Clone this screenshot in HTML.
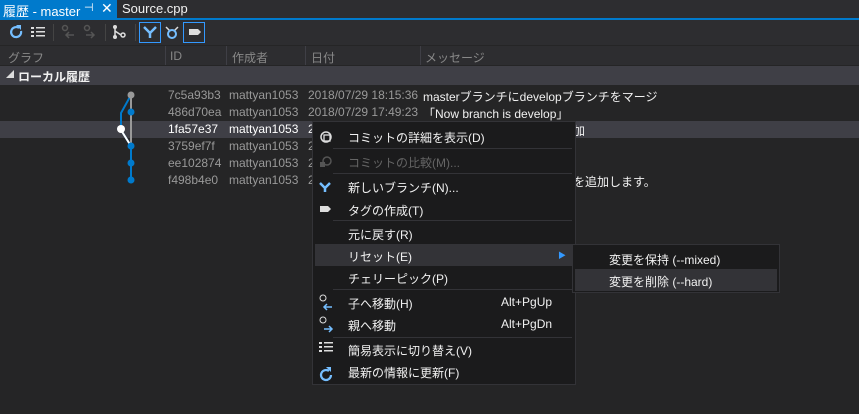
<!DOCTYPE html>
<html><head><meta charset="utf-8"><style>
*{margin:0;padding:0;box-sizing:border-box}
body{width:859px;height:414px;background:#252526;font-family:"Liberation Sans","Noto Sans CJK JP",sans-serif;font-size:12px;color:#f1f1f1;position:relative;overflow:hidden}
.a{position:absolute;white-space:nowrap}
.g{color:#999}
.m{position:absolute;left:312px;top:121px;width:264px;height:264px;background:#1b1b1c;border:1px solid #333337}
.sep{position:absolute;left:20px;right:3px;height:1px;background:#333337}
.it{position:absolute;left:35px;font-size:12px}
</style></head><body>
<div class="a" style="left:0;top:0;width:859px;height:18px;background:#2d2d30"></div>
<div class="a" style="left:0;top:0;width:117px;height:18px;background:#007acc"></div>
<div class="a" style="left:0;top:18px;width:859px;height:2px;background:#007acc"></div>
<div class="a" style="left:3px;top:1px;font-size:13px;color:#fff">履歴 - master</div>
<div class="a" style="left:84px;top:1px;font-size:11px;color:#fff">⊣</div>
<div class="a" style="left:101px;top:0px;font-size:14px;color:#fff">✕</div>
<div class="a" style="left:122px;top:1px;font-size:13px;color:#f1f1f1">Source.cpp</div>
<div class="a" style="left:0;top:20px;width:859px;height:25px;background:#2d2d30"></div>
<svg class="a" style="left:0;top:20px" width="220" height="25">
<path d="M21 11a5 5 0 1 1-2-3" stroke="#75beff" stroke-width="2.2" fill="none"/><path d="M16 5h5v5z" fill="#75beff"/>
<g fill="#ddd"><rect x="31" y="7" width="3" height="2"/><rect x="31" y="11" width="3" height="2"/><rect x="31" y="15" width="3" height="2"/><rect x="36" y="7" width="9" height="1.5"/><rect x="36" y="11" width="9" height="1.5"/><rect x="36" y="15" width="9" height="1.5"/></g>
<rect x="53" y="4" width="1" height="17" fill="#444"/>
<g stroke="#555" fill="none" stroke-width="1.5"><circle cx="65" cy="8" r="2.5"/><path d="M74 15h-8m3-3l-3 3 3 3"/><circle cx="87" cy="8" r="2.5"/><path d="M86 15h8m-3-3l3 3-3 3"/></g>
<rect x="105" y="4" width="1" height="17" fill="#444"/>
<g stroke="#ddd" fill="none" stroke-width="1.5"><path d="M115 7v10M115 11l6 4"/><circle cx="123" cy="15" r="2"/></g><circle cx="115" cy="7" r="2" fill="#ddd"/><circle cx="115" cy="17" r="2" fill="#ddd"/>
<rect x="135" y="4" width="1" height="17" fill="#444"/>
<rect x="139.5" y="2.5" width="21" height="20" fill="none" stroke="#3399ff"/>
<path d="M144 7l6 6 6-6M150 13v5" stroke="#75beff" stroke-width="2.5" fill="none"/>
<path d="M166 7l4 4M178 7l-4 4" stroke="#ddd" stroke-width="1.5"/><circle cx="172" cy="14" r="4" fill="none" stroke="#75beff" stroke-width="2"/>
<rect x="183.5" y="2.5" width="21" height="20" fill="none" stroke="#3399ff"/>
<path d="M189 9h9l3 3-3 3h-9z" fill="#ddd"/>
</svg>
<div class="a" style="left:0;top:46px;width:859px;height:19px;background:#2d2d30"></div>
<div class="a" style="left:165px;top:46px;width:1px;height:19px;background:#3f3f46"></div>
<div class="a" style="left:226px;top:46px;width:1px;height:19px;background:#3f3f46"></div>
<div class="a" style="left:305px;top:46px;width:1px;height:19px;background:#3f3f46"></div>
<div class="a" style="left:420px;top:46px;width:1px;height:19px;background:#3f3f46"></div>
<div class="a g" style="left:8px;top:49px;color:#888">グラフ</div>
<div class="a g" style="left:170px;top:49px;color:#888">ID</div>
<div class="a g" style="left:232px;top:49px;color:#888">作成者</div>
<div class="a g" style="left:311px;top:49px;color:#888">日付</div>
<div class="a g" style="left:425px;top:49px;color:#888">メッセージ</div>
<div class="a" style="left:0;top:66px;width:859px;height:19px;background:#3f3f46"></div>
<div class="a" style="left:6px;top:69px;font-size:8px;color:#ddd">◢</div>
<div class="a" style="left:18px;top:68px;font-weight:bold;color:#f1f1f1">ローカル履歴</div>
<div class="a" style="left:0;top:121px;width:859px;height:17px;background:#3f3f46"></div>
<svg class="a" style="left:110px;top:85px" width="30" height="100">
<path d="M21 10L11 28V45L21 61" stroke="#007acc" stroke-width="2" fill="none"/>
<path d="M21 10V61" stroke="#999" stroke-width="2"/>
<path d="M11 45L21 61" stroke="#fff" stroke-width="2"/>
<path d="M21 61V96" stroke="#007acc" stroke-width="2"/>
<circle cx="21" cy="10" r="3.5" fill="#999"/>
<circle cx="21" cy="27" r="3.5" fill="#007acc"/>
<circle cx="11" cy="44" r="4" fill="#fff"/>
<circle cx="21" cy="61" r="3.5" fill="#007acc"/>
<circle cx="21" cy="78" r="3.5" fill="#007acc"/>
<circle cx="21" cy="95" r="3.5" fill="#007acc"/>
</svg>
<div class="a g" style="left:168px;top:88px">7c5a93b3</div><div class="a g" style="left:229px;top:88px">mattyan1053</div><div class="a g" style="left:308px;top:88px">2018/07/29 18:15:36</div><div class="a" style="left:423px;top:88px">masterブランチにdevelopブランチをマージ</div>
<div class="a g" style="left:168px;top:105px">486d70ea</div><div class="a g" style="left:229px;top:105px">mattyan1053</div><div class="a g" style="left:308px;top:105px">2018/07/29 17:49:23</div><div class="a" style="left:423px;top:105px">「Now branch is develop」</div>
<div class="a" style="left:168px;top:122px;color:#fff">1fa57e37</div><div class="a" style="left:229px;top:122px;color:#fff">mattyan1053</div><div class="a" style="left:308px;top:122px">2</div><div class="a" style="left:573px;top:122px">加</div>
<div class="a g" style="left:168px;top:139px">3759ef7f</div><div class="a g" style="left:229px;top:139px">mattyan1053</div><div class="a g" style="left:308px;top:139px">2</div>
<div class="a g" style="left:168px;top:156px">ee102874</div><div class="a g" style="left:229px;top:156px">mattyan1053</div><div class="a g" style="left:308px;top:156px">2</div><div class="a" style="left:573px;top:156px">.</div>
<div class="a g" style="left:168px;top:173px">f498b4e0</div><div class="a g" style="left:229px;top:173px">mattyan1053</div><div class="a g" style="left:308px;top:173px">2</div><div class="a" style="left:573px;top:173px">を追加します。</div>
<div class="m">
<svg class="a" style="left:4px;top:4px" width="18" height="258">
<circle cx="9" cy="11" r="5" fill="none" stroke="#ddd" stroke-width="1.5"/><rect x="7" y="9" width="6" height="6" fill="none" stroke="#ddd" stroke-width="1.3"/>
<circle cx="10" cy="35" r="4" fill="none" stroke="#555" stroke-width="1.5"/><rect x="3" y="36" width="5" height="5" fill="#555"/>
<path d="M3 57l5 5 5-5M8 62v4" stroke="#75beff" stroke-width="2.5" fill="none"/>
<path d="M3 80h8l3 3-3 3h-8z" fill="#ddd"/>
<circle cx="6" cy="172" r="3" fill="none" stroke="#ddd"/><path d="M15 181h-8m3-3l-3 3 3 3" stroke="#75beff" stroke-width="1.5" fill="none"/>
<circle cx="6" cy="194" r="3" fill="none" stroke="#ddd"/><path d="M7 203h8m-3-3l3 3-3 3" stroke="#75beff" stroke-width="1.5" fill="none"/>
<g fill="#ddd"><rect x="2" y="216" width="3" height="2"/><rect x="2" y="220" width="3" height="2"/><rect x="2" y="224" width="3" height="2"/><rect x="7" y="216" width="9" height="1.5"/><rect x="7" y="220" width="9" height="1.5"/><rect x="7" y="224" width="9" height="1.5"/></g>
<path d="M14 249a5 5 0 1 1-2-4" stroke="#75beff" stroke-width="2.2" fill="none"/><path d="M9 241h5v5z" fill="#75beff"/>
</svg>
<div class="sep" style="top:26px"></div><div class="sep" style="top:51px"></div><div class="sep" style="top:98px"></div><div class="sep" style="top:167px"></div><div class="sep" style="top:215px"></div>
<div class="a" style="left:2px;top:122px;width:258px;height:22px;background:#333337"></div>
<div class="it" style="top:7px">コミットの詳細を表示(D)</div>
<div class="it" style="top:32px;color:#656565">コミットの比較(M)...</div>
<div class="it" style="top:57px">新しいブランチ(N)...</div>
<div class="it" style="top:80px">タグの作成(T)</div>
<div class="it" style="top:104px">元に戻す(R)</div>
<div class="it" style="top:126px">リセット(E)</div>
<div class="a" style="left:245px;top:128px;font-size:8px;color:#3399ff">▶</div>
<div class="it" style="top:148px">チェリーピック(P)</div>
<div class="it" style="top:173px">子へ移動(H)</div><div class="a" style="left:188px;top:173px">Alt+PgUp</div>
<div class="it" style="top:195px">親へ移動</div><div class="a" style="left:188px;top:195px">Alt+PgDn</div>
<div class="it" style="top:220px">簡易表示に切り替え(V)</div>
<div class="it" style="top:242px">最新の情報に更新(F)</div>
</div>
<div class="a" style="left:572px;top:244px;width:208px;height:49px;background:#1b1b1c;border:1px solid #333337"></div>
<div class="a" style="left:575px;top:269px;width:202px;height:22px;background:#333337"></div>
<div class="a" style="left:609px;top:251px">変更を保持 (--mixed)</div>
<div class="a" style="left:609px;top:273px">変更を削除 (--hard)</div>
</body></html>
